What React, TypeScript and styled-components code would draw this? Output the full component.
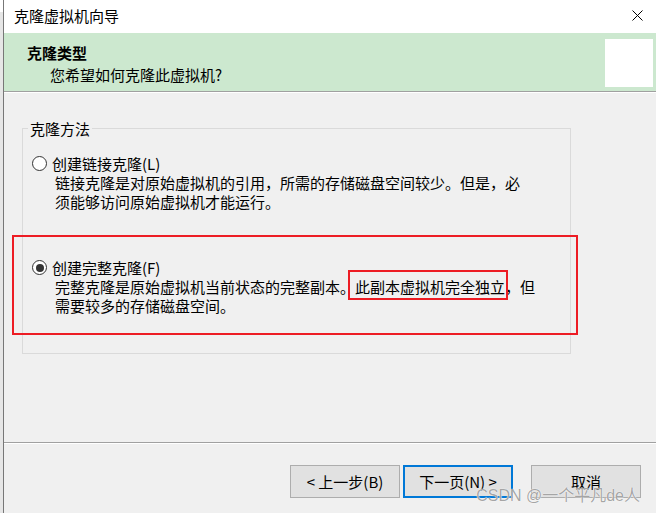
import React from "react";
import styled, { createGlobalStyle } from "styled-components";

const GlobalStyle = createGlobalStyle`
  html, body {
    margin: 0;
    padding: 0;
    background: #e9e9e9;
    font-family: "Noto Sans CJK SC", "Noto Sans", sans-serif;
    color: #000;
  }
  * { box-sizing: border-box; }
`;

const Window = styled.div`
  display: flex;
  height: 513px;
  width: 656px;
  padding-left: 3px;
  background: linear-gradient(#ffffff 0, #ffffff 12px, #e6e6e6 12px);
  overflow: hidden;
`;

const Dialog = styled.div`
  flex: 1;
  display: flex;
  flex-direction: column;
  border-left: 1px solid #777777;
  background: #f0f0f0;
  min-width: 0;
`;

const TitleBar = styled.div`
  height: 33px;
  flex: none;
  background: #ffffff;
  display: flex;
  align-items: center;
  justify-content: space-between;
  padding: 0 13px 2px 10px;
  font-size: 15px;
  line-height: 19px;
`;

const CloseIcon = styled.svg`
  width: 11px;
  height: 11px;
  display: block;
`;

const Header = styled.div`
  height: 59px;
  flex: none;
  background: #cce8cf;
  border-bottom: 1px solid #a0a0a0;
  box-shadow: 0 1px 0 #ffffff;
  display: flex;
  justify-content: space-between;
  padding: 0 3px 0 23px;
`;

const HeaderText = styled.div`
  padding-top: 10px;
  display: flex;
  flex-direction: column;
`;

const HeaderTitle = styled.div`
  font-size: 15px;
  line-height: 19px;
  font-weight: 700;
`;

const HeaderSubtitle = styled.div`
  font-size: 15px;
  line-height: 19px;
  margin: 3px 0 0 23px;
`;

const Logo = styled.div`
  width: 48px;
  height: 48px;
  background: #ffffff;
  align-self: center;
  margin-top: 1px;
`;

const Body = styled.div`
  flex: 1;
  padding: 36px 0 0 18px;
  border-bottom: 1px solid #a0a0a0;
`;

const GroupBox = styled.div`
  position: relative;
  width: 549px;
  height: 226px;
  border: 1px solid #dadada;
  padding: 25px 0 0 9px;
`;

const GroupLegend = styled.span`
  position: absolute;
  top: -10px;
  left: 5px;
  padding: 0 2px;
  background: #f0f0f0;
  font-size: 15px;
  line-height: 19px;
`;

const Option = styled.div<{ $highlight?: boolean; $gapTop?: number }>`
  position: relative;
  display: grid;
  grid-template-columns: 15px 1fr;
  column-gap: 5px;
  margin-top: ${(p) => p.$gapTop ?? 0}px;

  ${(p) =>
    p.$highlight &&
    `
    &::before {
      content: "";
      position: absolute;
      left: -20px;
      top: -23px;
      right: -8px;
      bottom: -20px;
      border: 2px solid #ed1c24;
      pointer-events: none;
    }
  `}
`;

const Radio = styled.span<{ $checked?: boolean }>`
  width: 15px;
  height: 15px;
  margin-top: 2px;
  border-radius: 50%;
  border: 1px solid #333333;
  background: #ffffff;
  display: flex;
  align-items: center;
  justify-content: center;

  &::after {
    content: "";
    width: 8px;
    height: 8px;
    border-radius: 50%;
    background: #333333;
    display: ${(p) => (p.$checked ? "block" : "none")};
  }
`;

const OptionText = styled.div`
  display: flex;
  flex-direction: column;
`;

const OptionLabel = styled.div`
  font-size: 15px;
  line-height: 19px;
`;

const Desc = styled.div`
  font-size: 15px;
  line-height: 19px;
  padding-left: 3px;
  white-space: nowrap;
`;

const Marked = styled.span`
  position: relative;
  display: inline-block;
  line-height: 19px;

  &::after {
    content: "";
    position: absolute;
    left: -7px;
    right: -3px;
    top: -7px;
    bottom: -4px;
    border: 2px solid #ed1c24;
    pointer-events: none;
  }
`;

const Footer = styled.div`
  position: relative;
  height: 70px;
  flex: none;
  border-top: 1px solid #ffffff;
  padding: 21px 15px 0 0;
  display: flex;
  justify-content: flex-end;
  align-items: flex-start;
`;

const Button = styled.button<{ $primary?: boolean; $gapLeft?: number }>`
  width: 110px;
  height: 33px;
  margin-left: ${(p) => p.$gapLeft ?? 0}px;
  background: #e1e1e1;
  border: ${(p) => (p.$primary ? "2px solid #0078d7" : "1px solid #adadad")};
  font-family: "Noto Sans CJK SC", "Noto Sans", sans-serif;
  font-size: 15px;
  line-height: 19px;
  color: #000;
  padding: 0;
  display: flex;
  align-items: center;
  justify-content: center;
`;

const Watermark = styled.span`
  position: absolute;
  right: 16px;
  bottom: 8px;
  font-family: "Liberation Sans", "Noto Sans CJK SC", sans-serif;
  font-size: 16px;
  line-height: 18px;
  color: rgba(105, 105, 105, 0.6);
  text-shadow: 0 0 1px rgba(255, 255, 255, 0.9), 0 0 1px rgba(255, 255, 255, 0.9);
  pointer-events: none;
  white-space: nowrap;
`;

export default function App() {
  return (
    <>
      <GlobalStyle />
      <Window>
        <Dialog>
          <TitleBar>
            <span>克隆虚拟机向导</span>
            <CloseIcon viewBox="0 0 11 11">
              <path d="M0.5 0.5 L10.5 10.5 M10.5 0.5 L0.5 10.5" stroke="#000" strokeWidth="1" fill="none" />
            </CloseIcon>
          </TitleBar>
          <Header>
            <HeaderText>
              <HeaderTitle>克隆类型</HeaderTitle>
              <HeaderSubtitle>您希望如何克隆此虚拟机?</HeaderSubtitle>
            </HeaderText>
            <Logo />
          </Header>
          <Body>
            <GroupBox>
              <GroupLegend>克隆方法</GroupLegend>
              <Option>
                <Radio />
                <OptionText>
                  <OptionLabel>创建链接克隆(L)</OptionLabel>
                  <Desc>
                    链接克隆是对原始虚拟机的引用，所需的存储磁盘空间较少。但是，必
                    <br />
                    须能够访问原始虚拟机才能运行。
                  </Desc>
                </OptionText>
              </Option>
              <Option $highlight $gapTop={47}>
                <Radio $checked />
                <OptionText>
                  <OptionLabel>创建完整克隆(F)</OptionLabel>
                  <Desc>
                    完整克隆是原始虚拟机当前状态的完整副本。<Marked>此副本虚拟机完全独立</Marked>，但
                    <br />
                    需要较多的存储磁盘空间。
                  </Desc>
                </OptionText>
              </Option>
            </GroupBox>
          </Body>
          <Footer>
            <Button>&lt; 上一步(B)</Button>
            <Button $primary $gapLeft={3}>下一页(N) &gt;</Button>
            <Button $gapLeft={18}>取消</Button>
            <Watermark>CSDN @一个平凡de人</Watermark>
          </Footer>
        </Dialog>
      </Window>
    </>
  );
}
